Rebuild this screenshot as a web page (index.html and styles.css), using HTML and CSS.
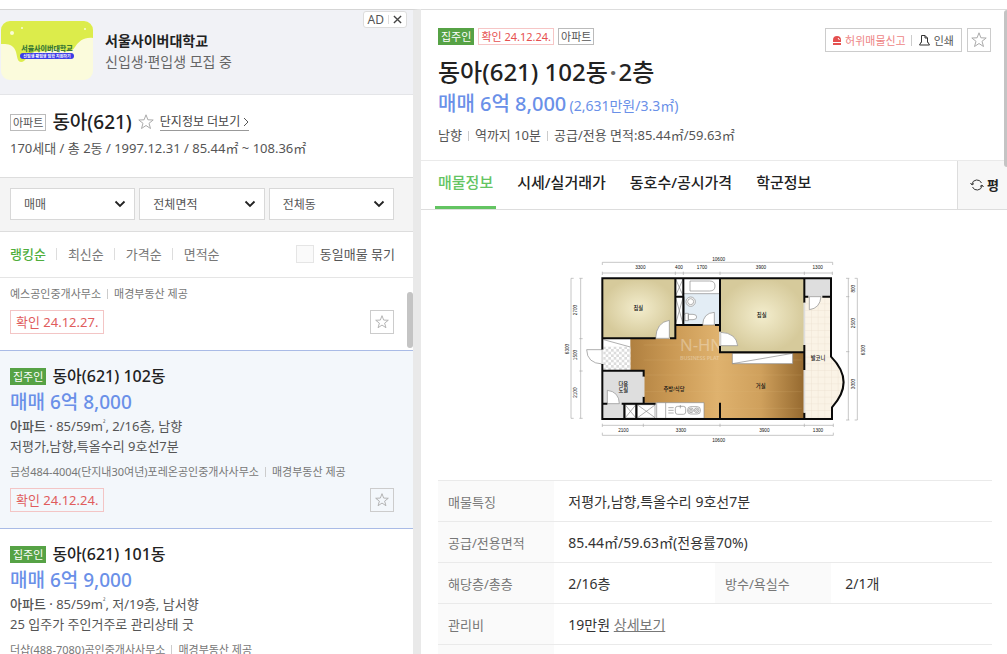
FILE: index.html
```html
<!DOCTYPE html>
<html lang="ko">
<head>
  <meta charset="utf-8">
  <title>동아(621)</title>
  <link rel="stylesheet" href="styles.css">
</head>
<body>
  <svg class="defs" width="0" height="0">
    <symbol id="star" viewBox="0 0 16 16">
      <path d="M8 .8l1.900 5 5.300.2-4.200 3.300 1.500 5.200L8 11.500l-4.500 3 1.500-5.200L.8 6l5.300-.2z" fill="none" stroke="currentColor"/>
    </symbol>
    <symbol id="arrow" viewBox="0 0 12 8">
      <path d="M1.500 1.500L6 6l4.500-4.500" fill="none" stroke="currentColor" stroke-width="1.800"/>
    </symbol>
  </svg>

  <div class="page">
    <aside class="side">
      <div class="ad">
        <svg class="ad-img" viewBox="0 0 92 59" width="92" height="59">
          <rect width="92" height="59" rx="9" fill="#fbfbdc"/>
          <path d="M0 23V9a9 9 0 0 1 9-9h74a9 9 0 0 1 9 9v8c-9-1-14 3-18 9-3 5-8 5-13 4-5-3-9-3-13 0-6 1-14 0-18 2-5 3-5 9-10 9-5 0-3-9-7-14-3-4-7-4-13-4z" fill="#dcec4b"/>
          <circle cx="11" cy="12" r="2" fill="#f9fcd6"/>
          <circle cx="21" cy="7" r="1" fill="#f9fcd6"/>
          <circle cx="84" cy="8" r="1" fill="#f9fcd6"/>
          <text x="46" y="30" class="ad-name">서울사이버대학교</text>
          <rect x="19" y="32" width="54" height="6" rx="3" fill="#3c3ce6"/>
          <text x="46" y="37" class="ad-sub">신입생·편입생 입학 지원하기</text>
        </svg>
        <div class="ad-text">
          <strong>서울사이버대학교</strong>
          <span>신입생·편입생 모집 중</span>
        </div>
        <div class="ad-mark">
          <span>AD</span>
          <button type="button" aria-label="광고 닫기">
            <svg viewBox="0 0 10 10" width="9" height="9"><path d="M1 1l8 8M9 1L1 9" stroke="#444" stroke-width="1.500"/></svg>
          </button>
        </div>
      </div>

      <div class="complex">
        <div class="complex-title">
          <span class="badge gray">아파트</span>
          <h1>동아(621)</h1>
          <button type="button" class="star" aria-label="관심단지"><svg width="16" height="16"><use href="#star"/></svg></button>
          <a href="#" class="more">단지정보 더보기
            <svg viewBox="0 0 6 10" width="6" height="10"><path d="M1 1l4 4-4 4" fill="none" stroke="#555"/></svg>
          </a>
        </div>
        <p>170세대 / 총 2동 / 1997.12.31 / 85.44㎡ ~ 108.36㎡</p>
      </div>

      <div class="filters">
        <div class="select">
          <select aria-label="거래방식"><option>매매</option></select>
          <svg width="12" height="8"><use href="#arrow"/></svg>
        </div>
        <div class="select">
          <select aria-label="면적"><option>전체면적</option></select>
          <svg width="12" height="8"><use href="#arrow"/></svg>
        </div>
        <div class="select">
          <select aria-label="동"><option>전체동</option></select>
          <svg width="12" height="8"><use href="#arrow"/></svg>
        </div>
      </div>

      <div class="sort">
        <a href="#" class="on">랭킹순</a>
        <a href="#">최신순</a>
        <a href="#">가격순</a>
        <a href="#">면적순</a>
        <label class="group" for="same"><input type="checkbox" id="same">동일매물 묶기</label>
      </div>

      <div class="list">
        <div class="item first">
          <p class="agent"><span>예스공인중개사무소</span><span>매경부동산 제공</span></p>
          <div class="item-foot">
            <span class="confirm">확인 24.12.27.</span>
            <button type="button" class="star box" aria-label="관심매물"><svg width="14" height="14"><use href="#star"/></svg></button>
          </div>
        </div>

        <div class="item selected">
          <h2><span class="badge green">집주인</span>동아(621) 102동</h2>
          <p class="price">매매 6억 8,000</p>
          <p class="spec"><b>아파트 ·</b> 85/59m<sup>²</sup>, 2/16층, 남향</p>
          <p class="spec">저평가,남향,특올수리 9호선7분</p>
          <p class="agent"><span>금성484-4004(단지내30여년)포레온공인중개사사무소</span><span>매경부동산 제공</span></p>
          <div class="item-foot">
            <span class="confirm">확인 24.12.24.</span>
            <button type="button" class="star box" aria-label="관심매물"><svg width="14" height="14"><use href="#star"/></svg></button>
          </div>
        </div>

        <div class="item">
          <h2><span class="badge green">집주인</span>동아(621) 101동</h2>
          <p class="price">매매 6억 9,000</p>
          <p class="spec"><b>아파트 ·</b> 85/59m<sup>²</sup>, 저/19층, 남서향</p>
          <p class="spec">25 입주가 주인거주로 관리상태 굿</p>
          <p class="agent"><span>더샵(488-7080)공인중개사사무소</span><span>매경부동산 제공</span></p>
        </div>
        <div class="thumb"></div>
      </div>
    </aside>

    <main class="detail">
      <div class="info">
        <div class="info-top">
          <span class="badge green">집주인</span>
          <span class="badge red">확인 24.12.24.</span>
          <span class="badge gray">아파트</span>
        </div>
        <h2>동아(621) 102동<i>·</i>2층</h2>
        <p class="info-price">매매 6억 8,000 <span>(2,631만원/3.3㎡)</span></p>
        <p class="info-sub"><span>남향</span><span>역까지 10분</span><span>공급/전용 면적:85.44㎡/59.63㎡</span></p>
        <div class="tools">
          <div class="tool-box">
            <button type="button" class="report">
              <svg viewBox="0 0 8 9" width="8" height="9"><path d="M0 6V4a4 4 0 0 1 8 0v2zM0 7h8v2H0z" fill="#e4504f"/><path d="M5 2l1.500 2" stroke="#fff"/></svg>허위매물신고
            </button>
            <button type="button" class="print">
              <svg viewBox="0 0 11 12" width="11" height="12"><path d="M2.500 8.500V1.500h3.500l2.500 2.500v4.500M6 1.500V4h2.500M2.500 7.500L.5 11h10l-2-3.500" fill="none" stroke="#333"/></svg>인쇄
            </button>
          </div>
          <button type="button" class="star box" aria-label="관심매물"><svg width="16" height="16"><use href="#star"/></svg></button>
        </div>
      </div>

      <nav class="tabs">
        <a href="#" class="on">매물정보</a>
        <a href="#">시세/실거래가</a>
        <a href="#">동호수/공시가격</a>
        <a href="#">학군정보</a>
        <button type="button" class="unit">
          <svg viewBox="0 0 14 12" width="14" height="12"><path d="M2 5a5 5 0 0 1 9.500-1M12 7a5 5 0 0 1-9.500 1M.5 4l1.500 2 2-1.500M13.500 8L12 6l-2 1.500" fill="none" stroke="#333"/></svg>평
        </button>
      </nav>

      <div class="plan">
        <!-- 평면도 -->
        <svg viewBox="0 0 960 615" width="320" height="205" role="img" aria-label="평면도">
          <defs>
            <radialGradient id="room"><stop offset="0" stop-color="#f3edcd"/><stop offset="1" stop-color="#d6ca9b"/></radialGradient>
            <linearGradient id="wood" x1="0" y1="0" x2="1" y2="0">
              <stop offset="0" stop-color="#b08040"/><stop offset=".25" stop-color="#cb9a55"/>
              <stop offset=".5" stop-color="#dfb26e"/><stop offset=".75" stop-color="#cfa05c"/><stop offset="1" stop-color="#95692f"/>
            </linearGradient>
            <pattern id="check" width="16" height="16" patternUnits="userSpaceOnUse">
              <rect width="16" height="16" fill="#fff"/><path d="M0 0h8v8H0zM8 8h8v8H8z" fill="#dcdcdc"/>
            </pattern>
            <pattern id="tile" x="748" y="155" width="20" height="20" patternUnits="userSpaceOnUse">
              <rect width="20" height="20" fill="#faf3e6"/><path d="M0 0H20M0 0V20" stroke="#e6dccb" stroke-width="2"/>
            </pattern>
          </defs>

          <path d="M142 100H828V335Q902 410 831 487V522H142z" fill="#fff"/>
          <rect x="142" y="100" width="219" height="180" fill="url(#room)"/>
          <rect x="495" y="100" width="253" height="222" fill="url(#room)"/>
          <path d="M226 281H361V240H495V322H748V522H447V473H266V377H226z" fill="url(#wood)"/>
          <path d="M266 300H480M266 345H740M270 390H740M270 440H740M450 490H740" stroke="#e2bd80" stroke-width="1" opacity=".5"/>
          <rect x="385" y="146" width="110" height="94" fill="#e3edf5"/>
          <rect x="145" y="305" width="81" height="70" fill="url(#check)"/>
          <path d="M146 284l80 22" stroke="#888" stroke-width="2"/>
          <path d="M142 378H266V476H208V522H142z" fill="#dedede"/>
          <rect x="748" y="100" width="80" height="55" fill="#dedede"/>
          <path d="M748 155H828V335Q902 410 831 487V522H748z" fill="url(#tile)"/>

          <g class="mark">
            <text x="375" y="318" class="mark-big">N-HN</text>
            <text x="375" y="346">BUSINESS PLAT</text>
          </g>

          <g class="thin">
            <path d="M405 108H464Q480 108 480 123Q480 138 464 138H405zM388 155v55M385 146H495"/>
            <circle cx="407" cy="170" r="14"/><circle cx="407" cy="170" r="9"/>
            <path d="M390 205h10v22h-10zM400 208h14q11 0 11 8t-11 8h-14z"/>
            <path d="M362 102l22 50M384 102l-22 50M362 158l22 78M384 158l-22 78"/>
            <path d="M211 479H242V519H211zM247 479H300V519H247z"/>
            <path d="M211 480l31 38M242 480l-31 38M248 480l52 38M300 480l-52 38"/>
            <path d="M305 473H447V520H305zM332 473V520M340 488h16M340 496h16M340 504h16"/>
            <rect x="361" y="484" width="31" height="24" rx="7"/><path d="M376 480v10"/>
            <rect x="398" y="485" width="38" height="22" rx="9"/>
            <circle cx="408" cy="496" r="7"/><circle cx="425" cy="496" r="7"/><circle cx="408" cy="496" r="3"/><circle cx="425" cy="496" r="3"/>
            <path d="M532 325H713V356H532zM532 356L713 325"/>
            <path d="M343 280V226Q304 232 302 280z"/>
            <path d="M478 240V202Q444 204 443 240z"/>
            <path d="M497 302H548Q544 264 497 262z"/>
            <path d="M142 314H95Q96 355 142 357z"/>
            <path d="M157 476V436Q192 440 193 476z"/>
            <path d="M763 155V194Q795 190 798 155z"/>
          </g>

          <path class="wall" d="M142 314V100H828V335Q902 410 831 487V522H142V357"/>
          <path class="wall" d="M142 280H302M345 280H361V100M385 100V240M361 155H385M361 240H443M480 240H495M495 100V260M495 302V322H748M142 377H266V395M266 455V476H200M157 476H142M208 476V522M244 476V522M244 476H302M495 473V522M748 100V173M748 300V375M748 503V522M748 155H760M802 155H828"/>
          <path class="window" d="M748 173V300M748 375V503M266 395V455M142 314V357M495 260V302"/>

          <g class="dim">
            <path d="M142 52H833M142 52v8M833 52v8M142 84H833M142 80v10M361 80v10M385 80v10M495 80v10M748 80v10M832 80v10"/>
            <path d="M48 100V520M48 100h8M48 520h8M77 100V520M73 100h10M73 281h10M73 378h10M73 520h10"/>
            <path d="M880 100V525M873 100h10M873 155h10M873 320h10M873 525h10M907 100V525M899 100h8M899 525h8"/>
            <path d="M142 541H835M142 536v10M265 536v10M495 536v10M748 536v10M835 536v10M142 571H835M142 563v8M835 563v8"/>
          </g>
          <g class="num">
            <text x="491" y="47">10600</text><text x="256" y="71">3300</text><text x="372" y="71">400</text>
            <text x="441" y="71">1700</text><text x="618" y="71">3900</text><text x="788" y="71">1300</text>
            <text x="205" y="560">2100</text><text x="378" y="560">3300</text><text x="628" y="560">3900</text>
            <text x="789" y="560">1300</text><text x="491" y="590">10600</text>
            <text transform="translate(42 312) rotate(-90)">6300</text>
            <text transform="translate(65 195) rotate(-90)">2700</text>
            <text transform="translate(65 330) rotate(-90)">1500</text>
            <text transform="translate(65 443) rotate(-90)">2100</text>
            <text transform="translate(900 131) rotate(-90)">800</text>
            <text transform="translate(900 234) rotate(-90)">2500</text>
            <text transform="translate(900 417) rotate(-90)">3000</text>
            <text transform="translate(929 315) rotate(-90)">6300</text>
          </g>
          <g class="room">
            <text x="250" y="196">침실</text><text x="620" y="217">침실</text><text x="617" y="430">거실</text>
            <text x="357" y="439">주방/식당</text><text x="205" y="424">다용</text><text x="205" y="441">도실</text>
            <text x="789" y="346">발코니</text>
          </g>
        </svg>
      </div>

      <table class="spec-table">
        <colgroup><col class="head"><col><col class="head"><col></colgroup>
        <tr><th scope="row">매물특징</th><td colspan="3">저평가,남향,특올수리 9호선7분</td></tr>
        <tr><th scope="row">공급/전용면적</th><td colspan="3">85.44㎡/59.63㎡(전용률70%)</td></tr>
        <tr><th scope="row">해당층/총층</th><td>2/16층</td><th scope="row">방수/욕실수</th><td>2/1개</td></tr>
        <tr><th scope="row">관리비</th><td colspan="3">19만원 <a href="#">상세보기</a></td></tr>
        <tr><th scope="row"></th><td colspan="3"></td></tr>
      </table>
      <div class="thumb"></div>
    </main>
  </div>
</body>
</html>
```

FILE: styles.css
```css
* {
  box-sizing: border-box;
}

body {
  margin: 0;
  font-family: "Noto Sans", "Noto Sans CJK KR", sans-serif;
  font-size: 13px;
  color: #555;
  background: #fff;
}

h1, h2, p {
  margin: 0;
  font-weight: 400;
}

h1, h2 {
  font-weight: 500;
}

a {
  color: inherit;
  text-decoration: none;
}

button {
  font: inherit;
  color: inherit;
  background: none;
  border: 0;
  padding: 0;
  cursor: pointer;
}

.defs {
  position: absolute;
}

.page {
  display: flex;
  height: 100vh;
  padding-top: 9px;
  overflow: hidden;
}

/* 왼쪽 목록 */
.side {
  flex: none;
  width: 421px;
  display: flex;
  flex-direction: column;
  border-top: 1px solid #d5d5d5;
  border-right: 8px solid #e9e9e9;
}

.ad {
  position: relative;
  flex: none;
  display: flex;
  align-items: center;
  gap: 12px;
  height: 85px;
  padding: 0 0 3px 1px;
  background: #f1f2f6;
  border-bottom: 1px solid #e4e5e8;
}

.ad-name {
  font-size: 7px;
  font-weight: 900;
  fill: #3b7a35;
  text-anchor: middle;
}

.ad-sub {
  font-size: 4px;
  font-weight: 700;
  fill: #fff;
  text-anchor: middle;
}

.ad-text {
  display: flex;
  flex-direction: column;
  font-size: 14px;
  line-height: 21px;
  color: #666;
}

.ad-text strong {
  font-weight: 700;
  color: #222;
}

.ad-mark {
  position: absolute;
  top: 1px;
  right: 6px;
  display: flex;
  align-items: center;
  gap: 4px;
  height: 17px;
  padding: 0 4px;
  font-size: 12px;
  background: #fff;
  border: 1px solid #ddd;
  border-radius: 3px;
}

.ad-mark button {
  display: flex;
  padding-left: 4px;
  border-left: 1px solid #ddd;
}

.complex {
  flex: none;
  height: 82px;
  padding: 13px 10px;
}

.complex-title {
  display: flex;
  align-items: center;
  gap: 6px;
}

.complex h1 {
  font-size: 19px;
  line-height: 28px;
  color: #222;
}

.complex p {
  line-height: 24px;
}

.more {
  font-size: 12px;
  line-height: 16px;
  color: #444;
  border-bottom: 1px solid #999;
}

.more svg {
  vertical-align: middle;
}

.badge {
  display: inline-block;
  height: 17px;
  padding: 0 2px;
  font-size: 11px;
  line-height: 15px;
  font-weight: 400;
  border: 1px solid #bbb;
}

.badge.green {
  color: #fff;
  background: #56a245;
  border-color: #56a245;
}

.badge.red {
  color: #e65050;
  border-color: #f6c6c6;
}

.star {
  display: flex;
  align-items: center;
  justify-content: center;
  color: #aaa;
}

.star.box {
  width: 24px;
  height: 24px;
  border: 1px solid #ccc;
}

.filters {
  flex: none;
  display: flex;
  gap: 4px;
  padding: 10px 19px 11px 10px;
  background: #f4f4f4;
  border-top: 1px solid #ddd;
  border-bottom: 1px solid #ddd;
}

.select {
  position: relative;
  flex: 1;
}

.select select {
  display: block;
  width: 100%;
  height: 32px;
  padding: 0 13px;
  font: inherit;
  font-size: 12px;
  color: #555;
  background: #fff;
  border: 1px solid #d8d8d8;
  border-radius: 0;
  appearance: none;
}

.select svg {
  position: absolute;
  top: 12px;
  right: 9px;
  color: #222;
  pointer-events: none;
}

.sort {
  flex: none;
  display: flex;
  align-items: center;
  height: 46px;
  padding: 0 18px 2px 10px;
  border-bottom: 1px solid #e5e5e5;
  color: #777;
}

.sort a + a {
  display: flex;
  align-items: center;
}

.sort a + a::before {
  content: "";
  height: 12px;
  margin: 0 11px 0 10px;
  border-left: 1px solid #ddd;
}

.sort .on {
  font-weight: 500;
  color: #4fae3c;
}

.group {
  display: flex;
  align-items: center;
  gap: 6px;
  margin-left: auto;
  color: #555;
}

.group input {
  width: 18px;
  height: 18px;
  margin: 0;
  appearance: none;
  background: #fafafa;
  border: 1px solid #e5e5e5;
}

.list {
  position: relative;
  flex: 1;
  min-height: 0;
  overflow: hidden;
}

.item {
  padding: 13px 19px 16px 10px;
  border-bottom: 1px solid #a9bbe6;
}

.item.first {
  padding-top: 4px;
}

.item.selected {
  background: #f3f7fb;
}

.item h2 {
  display: flex;
  align-items: center;
  gap: 6px;
  font-size: 16px;
  line-height: 24px;
  color: #222;
}

.price {
  font-size: 19px;
  line-height: 28px;
  font-weight: 500;
  color: #6a90e8;
}

.spec {
  line-height: 20px;
}

.spec b {
  font-weight: 500;
}

.spec sup {
  font-size: 7px;
  line-height: 0;
}

.agent {
  display: flex;
  align-items: center;
  height: 22px;
  font-size: 11px;
  color: #777;
}

.spec + .agent {
  margin-top: 4px;
}

.agent span + span::before,
.info-sub span + span::before {
  content: "";
  display: inline-block;
  height: 10px;
  margin: 0 6px;
  border-left: 1px solid #ccc;
  vertical-align: -1px;
}

.item-foot {
  display: flex;
  justify-content: space-between;
  margin-top: 6px;
}

.confirm {
  height: 24px;
  padding: 0 5px;
  line-height: 22px;
  color: #e05c5c;
  border: 1px solid #f3c5c5;
}

.thumb {
  position: absolute;
  top: 14px;
  right: 0;
  width: 6px;
  height: 56px;
  background: #c4c4c4;
  border-radius: 3px;
}

/* 오른쪽 상세 */
.detail {
  position: relative;
  flex: 1;
  min-width: 0;
  overflow: hidden;
  border-top: 1px solid #ddd;
}

.detail > .thumb {
  top: 0;
  right: -3px;
  height: 157px;
}

.info {
  position: relative;
  height: 150px;
  padding: 18px 17px 0;
}

.info-top {
  display: flex;
  gap: 4px;
}

.info h2 {
  margin-top: 11px;
  font-size: 24px;
  line-height: 32px;
  color: #222;
}

.info h2 i {
  margin: 0 2px;
  font-style: normal;
  font-weight: 700;
  color: #666;
}

.info-price {
  font-size: 20px;
  line-height: 32px;
  font-weight: 500;
  color: #6a90e8;
}

.info-price span {
  margin-left: -2px;
  font-size: 14px;
  font-weight: 400;
}

.info-sub {
  line-height: 26px;
}

.tools {
  position: absolute;
  top: 18px;
  right: 16px;
  display: flex;
  gap: 5px;
}

.tool-box {
  display: flex;
  height: 24px;
  padding: 0 7px;
  font-size: 11px;
  border: 1px solid #ccc;
}

.tool-box button {
  display: flex;
  align-items: center;
  gap: 4px;
}

.report {
  color: #ee8585;
}

.print::before {
  content: "";
  height: 11px;
  margin: 0 3px 0 5px;
  border-left: 1px solid #ccc;
}

.tabs {
  display: flex;
  gap: 24px;
  height: 50px;
  padding-left: 14px;
  font-size: 15px;
  font-weight: 500;
  line-height: 42px;
  color: #222;
  border-top: 1px solid #eaeaea;
  border-bottom: 1px solid #ddd;
}

.tabs .on {
  padding: 0 3px;
  margin-right: -3px;
  color: #63c462;
  border-bottom: 3px solid #63c462;
}

.unit {
  display: flex;
  align-items: center;
  gap: 3px;
  width: 50px;
  margin-left: auto;
  padding-left: 12px;
  font-size: 13px;
  font-weight: 700;
  background: #f7f7f7;
  border-left: 1px solid #ddd;
}

.plan {
  display: flex;
  justify-content: center;
  padding: 35px 0 30px 2px;
}

.thin {
  fill: #fff;
  stroke: #888;
  stroke-width: 2;
}

.wall {
  fill: none;
  stroke: #0a0a0a;
  stroke-width: 6;
}

.window {
  fill: none;
  stroke: #ddd;
  stroke-width: 5;
}

.dim {
  fill: none;
  stroke: #aaa;
  stroke-width: 2;
}

.num, .room {
  font-family: "Liberation Sans", "Noto Sans CJK KR", sans-serif;
  font-size: 14px;
  fill: #111;
  text-anchor: middle;
}

.room {
  font-size: 16px;
  font-weight: 500;
}

.mark {
  font-size: 16px;
  font-weight: 600;
  fill: #fff;
  opacity: .3;
}

.mark-big {
  font-size: 50px;
  font-weight: 400;
}

.spec-table {
  width: calc(100% - 32px);
  margin: 0 15px 0 17px;
  table-layout: fixed;
  border-collapse: collapse;
  font-size: 14px;
  color: #333;
}

.spec-table .head {
  width: 21%;
}

.spec-table tr {
  height: 41px;
  border-top: 1px solid #eaeaea;
}

.spec-table th {
  padding: 0 10px;
  font-size: 13px;
  font-weight: 400;
  text-align: left;
  color: #777;
  background: #fafafa;
}

.spec-table td {
  padding: 0 14px;
}

.spec-table a {
  color: #777;
  text-decoration: underline;
}
```
